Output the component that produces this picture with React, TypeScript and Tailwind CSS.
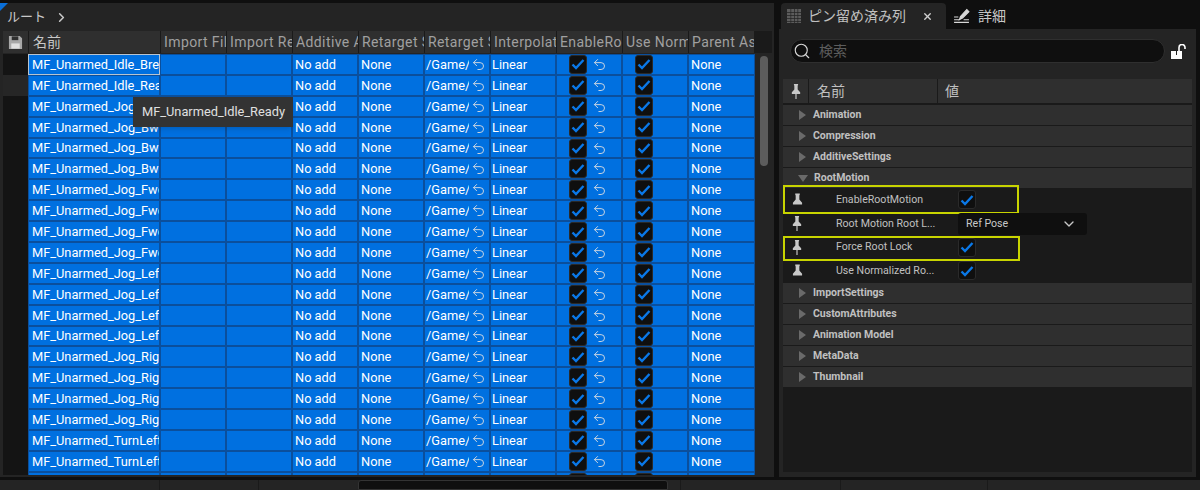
import { ChevronDown, ChevronRight, Search, Undo2, X } from 'lucide-react'

const names = [
  'MF_Unarmed_Idle_Break', 'MF_Unarmed_Idle_Ready', 'MF_Unarmed_Jog_Bwd', 'MF_Unarmed_Jog_Bwd', 'MF_Unarmed_Jog_Bwd',
  'MF_Unarmed_Jog_Bwd', 'MF_Unarmed_Jog_Fwd', 'MF_Unarmed_Jog_Fwd', 'MF_Unarmed_Jog_Fwd', 'MF_Unarmed_Jog_Fwd',
  'MF_Unarmed_Jog_Left', 'MF_Unarmed_Jog_Left', 'MF_Unarmed_Jog_Left', 'MF_Unarmed_Jog_Left', 'MF_Unarmed_Jog_Right',
  'MF_Unarmed_Jog_Right', 'MF_Unarmed_Jog_Right', 'MF_Unarmed_Jog_Right', 'MF_Unarmed_TurnLeft', 'MF_Unarmed_TurnLeft', '',
]

const headers = ['Import File', 'Import Reimport', 'Additive Anim', 'Retarget Source', 'Retarget Source', 'Interpolation', 'EnableRootMotion', 'Use Normalized', 'Parent Asset']

function Check() {
  return (
    <span className="flex h-[19px] w-[18px] shrink-0 items-center justify-center rounded-[3px] border border-[#2a2a2a] bg-[#0f0f0f]">
      <svg viewBox="0 0 14 14" className="h-[14px] w-[14px]" fill="none" stroke="#0a78e8" strokeWidth="2.400">
        <path d="M1.500 7.500 5 11l7.500-8" />
      </svg>
    </span>
  )
}

function Pin({ tilt }: { tilt?: boolean }) {
  return (
    <svg viewBox={tilt ? '0 0 12 13' : '0 0 12 18'} className={tilt ? 'h-[13px] w-[11px]' : 'h-[17px] w-[10px]'} fill="#c8c8c8">
      <path d="M3.500 0h5v1L8 2v4.500l3 3.500v2H1v-2l3-3.500V2l-.5-1z" />
      {!tilt && <path d="M5.300 12h1.400v6H5.300z" />}
    </svg>
  )
}

function SaveIcon() {
  return (
    <svg viewBox="0 0 16 16" className="h-[15px] w-[15px]" fill="#a8a8a8">
      <path d="M1 1h11.500L15 3.500V15H1z" />
      <path d="M4 1.500h7v4H4z" fill="#2f2f2f" />
      <path d="M3.500 9h9v5.500h-9z" fill="#e0e0e0" />
    </svg>
  )
}

function Row({ name, index }: { name: string; index: number }) {
  return (
    <div className="flex h-[20.9px] shrink-0">
      <div className={index === 1 ? 'w-[25px] shrink-0 bg-[#262626]' : 'w-[25px] shrink-0 bg-[#141414]'} />
      <div className={index === 0 ? 'flex w-[132px] shrink-0 items-center overflow-hidden whitespace-nowrap border border-[#b8c4d0] bg-[#0070e0] pl-[3px] text-white' : 'flex w-[132px] shrink-0 items-center overflow-hidden whitespace-nowrap border border-[#0b4f9c] bg-[#0070e0] pl-[3px] text-white'}>
        {name}
      </div>
      <div className="w-[66px] shrink-0 border border-[#0b4f9c] bg-[#0070e0]" />
      <div className="w-[66px] shrink-0 border border-[#0b4f9c] bg-[#0070e0]" />
      <div className="flex w-[66px] shrink-0 items-center border border-[#0b4f9c] bg-[#0070e0] pl-[2px] text-white">No add</div>
      <div className="flex w-[66px] shrink-0 items-center border border-[#0b4f9c] bg-[#0070e0] pl-[2px] text-white">None</div>
      <div className="flex w-[66px] shrink-0 items-center border border-[#0b4f9c] bg-[#0070e0] pl-[1px] text-white">
        <span className="w-[43px] shrink-0 overflow-hidden whitespace-nowrap">/Game/</span>
        <Undo2 className="ml-[2px] h-[15px] w-[15px] text-[#c8d4e2]" strokeWidth={1.600} />
      </div>
      <div className="flex w-[66px] shrink-0 items-center border border-[#0b4f9c] bg-[#0070e0] pl-[1px] text-white">Linear</div>
      <div className="flex w-[66px] shrink-0 items-center border border-[#0b4f9c] bg-[#0070e0] pl-[12px]">
        <Check />
        <Undo2 className="ml-[5px] h-[15px] w-[15px] text-[#c8d4e2]" strokeWidth={1.600} />
      </div>
      <div className="flex w-[66px] shrink-0 items-center border border-[#0b4f9c] bg-[#0070e0] pl-[12px]">
        <Check />
      </div>
      <div className="flex w-[67px] shrink-0 items-center border border-[#0b4f9c] bg-[#0070e0] pl-[2px] text-white">None</div>
    </div>
  )
}

function Category({ label, open }: { label: string; open?: boolean }) {
  return (
    <div className={open ? 'flex h-[20px] shrink-0 items-center bg-[#2f2f2f] pl-[15px] text-[10.500px] font-bold text-[#c0c0c0]' : 'mb-px flex h-[20px] shrink-0 items-center bg-[#2f2f2f] pl-[15px] text-[10.500px] font-bold text-[#c0c0c0]'}>
      <span className={open ? 'mr-[6px] h-0 w-0 border-x-[5px] border-t-[7px] border-x-transparent border-t-[#6a6a6a]' : 'mr-[7px] ml-[1px] h-0 w-0 border-y-[5px] border-l-[7px] border-y-transparent border-l-[#6a6a6a]'} />
      {label}
    </div>
  )
}

function Prop({ label, tilt, mark, children }: { label: string; tilt?: boolean; mark?: 'tall' | 'short'; children: React.ReactNode }) {
  return (
    <div className="relative flex h-[23.700px] shrink-0 items-center text-[10.600px] text-[#c0c0c0]">
      <div className="flex w-[28px] shrink-0 justify-center"><Pin tilt={tilt} /></div>
      <div className="ml-[25px] w-[122px] shrink-0 overflow-hidden whitespace-nowrap">{label}</div>
      {children}
      {mark === 'tall' && <div className="pointer-events-none absolute left-0 top-[-3px] h-[29px] w-[236px] border-2 border-[#c8d400]" />}
      {mark === 'short' && <div className="pointer-events-none absolute left-0 top-px h-[25px] w-[237px] border-2 border-[#c8d400]" />}
    </div>
  )
}

export default function App() {
  return (
    <div className="flex h-[490px] w-[1200px] flex-col overflow-hidden bg-[#0f0f0f] font-['Roboto','Noto_Sans_CJK_JP',sans-serif] text-[12.800px] text-[#c0c0c0]">
      <div className="flex h-[477px] shrink-0 pt-[3px]">
        {/* Table panel */}
        <div className="relative flex w-[774px] shrink-0 flex-col overflow-hidden bg-[#242424] pb-[2px]">
          <div className="absolute left-0 top-0 h-0 w-0 border-r-[8px] border-t-[8px] border-r-transparent border-t-[#0a6fd8]" />
          <div className="flex h-[28px] shrink-0 items-center pl-[7px] text-[13px] text-[#c8c8c8]">
            ルート
            <ChevronRight className="ml-[8px] h-[15px] w-[15px]" strokeWidth={2.500} />
          </div>
          <div className="ml-[3px] mr-[2px] flex h-[22px] shrink-0 bg-[#1a1a1a]">
            <div className="mr-px flex w-[25px] items-center justify-center bg-[#2f2f2f]"><SaveIcon /></div>
            <div className="mr-px flex w-[131px] items-center overflow-hidden bg-[#2f2f2f] pl-[4px] text-[14px] text-[#c8c8c8]">名前</div>
            {headers.map((h, i) => (
              <div key={i} className="mr-px flex w-[65px] items-center overflow-hidden whitespace-nowrap bg-[#2f2f2f] pl-[3px] text-[14px] tracking-[0.4px] text-[#a0a0a0]">
                {h}
              </div>
            ))}
          </div>
          <div className="ml-[3px] mt-px flex min-h-0 flex-1 overflow-hidden">
            <div className="flex w-[752px] shrink-0 flex-col">
              {names.map((n, i) => (
                <Row key={i} name={n} index={i} />
              ))}
            </div>
            <div className="ml-[5px] mt-[2px] h-[110px] w-[8px] rounded-full bg-[#5c5c5c]" />
          </div>
          <div className="absolute left-[133px] top-[94px] flex h-[30px] w-[160px] items-center bg-[#333333] pl-[9px] text-[12.800px] text-[#e0e0e0] shadow-md">
            MF_Unarmed_Idle_Ready
          </div>
        </div>

        {/* Details panel */}
        <div className="ml-[5px] mr-[4px] flex flex-1 flex-col">
          <div className="flex h-[26px] shrink-0 items-center">
            <div className="ml-[2px] flex h-[26px] w-[165px] items-center rounded-t-[4px] bg-[#242424] pl-[6px] text-[14px] text-[#c0c0c0]">
              <svg viewBox="0 0 14 14" className="mr-[7px] h-[14px] w-[14px]" fill="#5c5c5c">
                <path d="M0 0h14v14H0z" />
                <path d="M0 3h14v.7H0zM0 6h14v.7H0zM0 9h14v.7H0zM0 12h14v.7H0zM3.500 0h.7v14h-.7zM7 0h.7v14H7zM10.500 0h.7v14h-.7z" fill="#242424" />
              </svg>
              ピン留め済み列
              <X className="ml-[16px] h-[11px] w-[11px] text-[#d0d0d0]" strokeWidth={3} />
            </div>
            <div className="ml-[7px] flex items-center text-[14px] text-[#c8c8c8]">
              <svg viewBox="0 0 16 16" className="mr-[8px] h-[17px] w-[17px]" fill="none" stroke="#d8d8d8">
                <path d="M9 9.500 6 11l1-3 6-6.500 2 2z" fill="#d8d8d8" />
                <path d="M1 13.500h14M1 11h5M1 8.500h4M10 11h5" strokeWidth="1" />
              </svg>
              詳細
            </div>
          </div>
          <div className="flex min-h-0 flex-1 flex-col bg-[#242424] px-[4px] pb-[5px]">
            <div className="mb-[6px] flex h-[44px] shrink-0 items-center">
              <div className="ml-[7px] flex h-[24px] w-[375px] items-center rounded-full border border-[#2f2f2f] bg-[#0f0f0f] pl-[2px] text-[14px] text-[#5c5c5c]">
                <Search className="mr-[8px] h-[18px] w-[18px] text-[#d8d8d8]" strokeWidth={1.500} />
                検索
              </div>
              <svg viewBox="0 0 16 16" className="ml-[6px] mt-[2px] h-[16px] w-[16px]" fill="none">
                <path d="M0 7h11v8H0z" fill="#ffffff" />
                <path d="M5 7h1v4H5z" fill="#242424" />
                <path d="M8 7V3.500a3 3 0 0 1 6 0V5" stroke="#ffffff" strokeWidth="1.600" />
              </svg>
            </div>
            <div className="flex min-h-0 flex-1 flex-col bg-[#1a1a1a]">
              <div className="mb-[2px] flex h-[24px] shrink-0 bg-[#2f2f2f] text-[14px] text-[#c0c0c0]">
                <div className="flex w-[26px] items-center justify-center border-r border-[#1a1a1a]"><Pin /></div>
                <div className="flex w-[129px] items-center border-r border-[#1a1a1a] pl-[8px]">名前</div>
                <div className="flex items-center pl-[7px]">値</div>
              </div>
              <Category label="Animation" />
              <Category label="Compression" />
              <Category label="AdditiveSettings" />
              <Category label="RootMotion" open />
              <Prop label="EnableRootMotion" tilt mark="tall"><Check /></Prop>
              <Prop label="Root Motion Root L...">
                <div className="flex h-[22px] w-[129px] items-center justify-between rounded-[3px] bg-[#0f0f0f] pl-[8px] pr-[10px] text-[#c8c8c8]">
                  Ref Pose
                  <ChevronDown className="h-[16px] w-[16px]" strokeWidth={2} />
                </div>
              </Prop>
              <Prop label="Force Root Lock" mark="short"><Check /></Prop>
              <Prop label="Use Normalized Ro..." tilt><Check /></Prop>
              <Category label="ImportSettings" />
              <Category label="CustomAttributes" />
              <Category label="Animation Model" />
              <Category label="MetaData" />
              <Category label="Thumbnail" />
            </div>
          </div>
        </div>
      </div>

      {/* Bottom strip */}
      <div className="mt-[3px] flex flex-1 bg-[#242424]">
        <div className="w-[160px] border-r border-[#1a1a1a]" />
        <div className="w-[99px] border-r border-[#1a1a1a]" />
        <div className="w-[99px]" />
        <div className="w-[310px] rounded-t-[3px] border border-[#333333] bg-[#0f0f0f]" />
        <div className="w-[12px]" />
        <div className="w-[161px] border-x border-[#1a1a1a]" />
        <div className="w-[147px] border-r border-[#1a1a1a]" />
      </div>
    </div>
  )
}
